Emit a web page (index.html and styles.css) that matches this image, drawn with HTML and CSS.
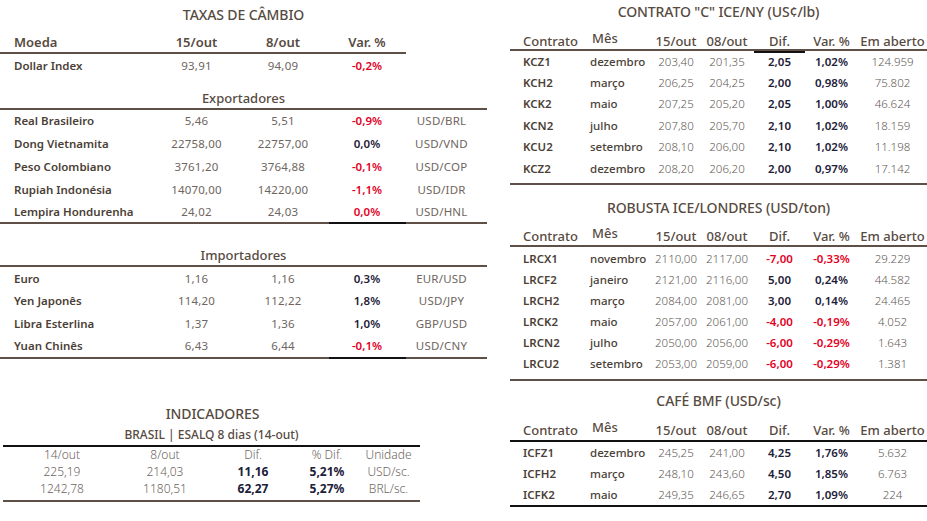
FILE: index.html
```html
<!DOCTYPE html>
<html lang="pt-BR">
<head>
<meta charset="utf-8">
<title>Mercado de Café</title>
<link rel="stylesheet" href="styles.css">
</head>
<body>
<div class="page">
  <section class="left">
    <div class="fx">
      <h2 class="title">TAXAS DE CÂMBIO</h2>
      <div class="fx-head">
        <span class="c-name">Moeda</span><span>15/out</span><span>8/out</span><span>Var. %</span>
      </div>
      <div class="fx-row first">
        <span class="c-name">Dollar Index</span><span class="num">93,91</span><span class="num">94,09</span><span class="var neg">-0,2%</span><span></span>
      </div>
      <h3 class="group">Exportadores</h3>
      <div class="fx-row"><span class="c-name">Real Brasileiro</span><span class="num">5,46</span><span class="num">5,51</span><span class="var neg">-0,9%</span><span class="code">USD/BRL</span></div>
      <div class="fx-row"><span class="c-name">Dong Vietnamita</span><span class="num">22758,00</span><span class="num">22757,00</span><span class="var pos">0,0%</span><span class="code">USD/VND</span></div>
      <div class="fx-row"><span class="c-name">Peso Colombiano</span><span class="num">3761,20</span><span class="num">3764,88</span><span class="var neg">-0,1%</span><span class="code">USD/COP</span></div>
      <div class="fx-row"><span class="c-name">Rupiah Indonésia</span><span class="num">14070,00</span><span class="num">14220,00</span><span class="var neg">-1,1%</span><span class="code">USD/IDR</span></div>
      <div class="fx-row"><span class="c-name">Lempira Hondurenha</span><span class="num">24,02</span><span class="num">24,03</span><span class="var neg">0,0%</span><span class="code">USD/HNL</span></div>
      <div class="rule fx-rule"><i></i><i class="dark"></i><i></i></div>
      <h3 class="group imp">Importadores</h3>
      <div class="fx-row imp-row"><span class="c-name">Euro</span><span class="num">1,16</span><span class="num">1,16</span><span class="var pos">0,3%</span><span class="code">EUR/USD</span></div>
      <div class="fx-row imp-row"><span class="c-name">Yen Japonês</span><span class="num">114,20</span><span class="num">112,22</span><span class="var pos">1,8%</span><span class="code">USD/JPY</span></div>
      <div class="fx-row imp-row"><span class="c-name">Libra Esterlina</span><span class="num">1,37</span><span class="num">1,36</span><span class="var pos">1,0%</span><span class="code">GBP/USD</span></div>
      <div class="fx-row imp-row"><span class="c-name">Yuan Chinês</span><span class="num">6,43</span><span class="num">6,44</span><span class="var neg">-0,1%</span><span class="code">USD/CNY</span></div>
      <div class="rule fx-rule"><i></i><i class="dark"></i><i></i></div>
    </div>

    <div class="ind">
      <h2 class="title ind-title">INDICADORES</h2>
      <h3 class="ind-sub">BRASIL | ESALQ 8 dias (14-out)</h3>
      <div class="ind-row ind-head"><span>14/out</span><span>8/out</span><span>Dif.</span><span>% Dif.</span><span>Unidade</span></div>
      <div class="ind-row"><span>225,19</span><span>214,03</span><span class="b">11,16</span><span class="b">5,21%</span><span>USD/sc.</span></div>
      <div class="ind-row last"><span>1242,78</span><span>1180,51</span><span class="b">62,27</span><span class="b">5,27%</span><span>BRL/sc.</span></div>
    </div>
  </section>

  <section class="right">
    <div class="mkt kc">
      <h2 class="title">CONTRATO "C" ICE/NY (US¢/lb)</h2>
      <div class="m-head"><span class="c1">Contrato</span><span class="c2">Mês</span><span>15/out</span><span>08/out</span><span class="dk">Dif.</span><span>Var. %</span><span>Em aberto</span></div>
      <div class="m-body">
        <div class="m-row"><span class="c1">KCZ1</span><span class="c2">dezembro</span><span class="num">203,40</span><span class="num">201,35</span><span class="var pos">2,05</span><span class="var pos">1,02%</span><span class="num">124.959</span></div>
        <div class="m-row"><span class="c1">KCH2</span><span class="c2">março</span><span class="num">206,25</span><span class="num">204,25</span><span class="var pos">2,00</span><span class="var pos">0,98%</span><span class="num">75.802</span></div>
        <div class="m-row"><span class="c1">KCK2</span><span class="c2">maio</span><span class="num">207,25</span><span class="num">205,20</span><span class="var pos">2,05</span><span class="var pos">1,00%</span><span class="num">46.624</span></div>
        <div class="m-row"><span class="c1">KCN2</span><span class="c2">julho</span><span class="num">207,80</span><span class="num">205,70</span><span class="var pos">2,10</span><span class="var pos">1,02%</span><span class="num">18.159</span></div>
        <div class="m-row"><span class="c1">KCU2</span><span class="c2">setembro</span><span class="num">208,10</span><span class="num">206,00</span><span class="var pos">2,10</span><span class="var pos">1,02%</span><span class="num">11.198</span></div>
        <div class="m-row"><span class="c1">KCZ2</span><span class="c2">dezembro</span><span class="num">208,20</span><span class="num">206,20</span><span class="var pos">2,00</span><span class="var pos">0,97%</span><span class="num">17.142</span></div>
      </div>
    </div>

    <div class="mkt lr">
      <h2 class="title">ROBUSTA ICE/LONDRES (USD/ton)</h2>
      <div class="m-head"><span class="c1">Contrato</span><span class="c2">Mês</span><span>15/out</span><span>08/out</span><span>Dif.</span><span>Var. %</span><span>Em aberto</span></div>
      <div class="m-body">
        <div class="m-row"><span class="c1">LRCX1</span><span class="c2">novembro</span><span class="num">2110,00</span><span class="num">2117,00</span><span class="var neg">-7,00</span><span class="var neg">-0,33%</span><span class="num">29.229</span></div>
        <div class="m-row"><span class="c1">LRCF2</span><span class="c2">janeiro</span><span class="num">2121,00</span><span class="num">2116,00</span><span class="var pos">5,00</span><span class="var pos">0,24%</span><span class="num">44.582</span></div>
        <div class="m-row"><span class="c1">LRCH2</span><span class="c2">março</span><span class="num">2084,00</span><span class="num">2081,00</span><span class="var pos">3,00</span><span class="var pos">0,14%</span><span class="num">24.465</span></div>
        <div class="m-row"><span class="c1">LRCK2</span><span class="c2">maio</span><span class="num">2057,00</span><span class="num">2061,00</span><span class="var neg">-4,00</span><span class="var neg">-0,19%</span><span class="num">4.052</span></div>
        <div class="m-row"><span class="c1">LRCN2</span><span class="c2">julho</span><span class="num">2050,00</span><span class="num">2056,00</span><span class="var neg">-6,00</span><span class="var neg">-0,29%</span><span class="num">1.643</span></div>
        <div class="m-row"><span class="c1">LRCU2</span><span class="c2">setembro</span><span class="num">2053,00</span><span class="num">2059,00</span><span class="var neg">-6,00</span><span class="var neg">-0,29%</span><span class="num">1.381</span></div>
      </div>
    </div>

    <div class="mkt bmf">
      <h2 class="title">CAFÉ BMF (USD/sc)</h2>
      <div class="m-head"><span class="c1">Contrato</span><span class="c2">Mês</span><span>15/out</span><span>08/out</span><span>Dif.</span><span>Var. %</span><span>Em aberto</span></div>
      <div class="m-body">
        <div class="m-row"><span class="c1">ICFZ1</span><span class="c2">dezembro</span><span class="num">245,25</span><span class="num">241,00</span><span class="var pos">4,25</span><span class="var pos">1,76%</span><span class="num">5.632</span></div>
        <div class="m-row"><span class="c1">ICFH2</span><span class="c2">março</span><span class="num">248,10</span><span class="num">243,60</span><span class="var pos">4,50</span><span class="var pos">1,85%</span><span class="num">6.763</span></div>
        <div class="m-row"><span class="c1">ICFK2</span><span class="c2">maio</span><span class="num">249,35</span><span class="num">246,65</span><span class="var pos">2,70</span><span class="var pos">1,09%</span><span class="num">224</span></div>
      </div>
    </div>
  </section>
</div>
</body>
</html>
```

FILE: styles.css
```css
* { box-sizing: border-box; margin: 0; padding: 0; }

html, body { background: #ffffff; }

body {
  margin: 0;
  width: 927px;
  height: 521px;
  overflow: hidden;
  font-family: "Noto Sans", "Open Sans", "DejaVu Sans", sans-serif;
  color: #4b3f37;
  font-size: 12px;
}

.page {
  display: flex;
  align-items: flex-start;
  gap: 23px;
}

.title {
  font-size: 14px;
  font-weight: 500;
  color: #574a3f;
  text-align: center;
  line-height: 30px;
  letter-spacing: -0.1px;
}

/* ---------- left column ---------- */
.left {
  width: 487px;
  display: flex;
  flex-direction: column;
}

.fx-head,
.fx-row {
  display: grid;
  grid-template-columns: 155px 83px 90px 78px 81px;
  align-items: center;
}

.fx-head {
  grid-template-columns: 155px 83px 90px 78px;
  width: 406px;
  height: 24px;
  padding-top: 2px;
  font-size: 13px;
  font-weight: 600;
  color: #574a3f;
  line-height: 20px;
  border-bottom: 2px solid #5e5047;
  text-align: center;
}
.fx-head .c-name { text-align: left; }

.c-name {
  padding-left: 14px;
  text-align: left;
  white-space: nowrap;
}

.fx-row {
  height: 22.6px;
  line-height: 18px;
  padding-top: 2px;
  text-align: center;
}
.fx-row .c-name {
  font-weight: 600;
  color: #4b3f37;
  font-size: 11.5px;
}
.fx-row.first { height: 21.5px; padding-top: 2px; }
.fx-row.imp-row { height: 22.3px; padding-top: 1px; }
.group + .fx-row { padding-top: 1px; }

.num {
  color: #6e6560;
  font-weight: 400;
  font-size: 11.5px;
  letter-spacing: 0.2px;
}

.var {
  font-weight: 600;
  font-size: 11.5px;
}
.neg { color: #e3001f; }
.pos { color: #1c2038; }

.code {
  color: #6e6560;
  font-size: 11.5px;
  padding-right: 10px;
  letter-spacing: 0.2px;
}

.group {
  font-size: 13px;
  font-weight: 500;
  color: #574a3f;
  text-align: center;
  line-height: 20px;
  padding-top: 12px;
  border-bottom: 2px solid #5e5047;
  width: 487px;
}
.group.imp { padding-top: 21px; }

.rule {
  display: grid;
  height: 2px;
}
.rule i { background: #5e5047; display: block; }
.rule i.dark { background: #111111; }
.fx-rule { grid-template-columns: 329px 77px 81px; }

/* indicadores */
.ind {
  width: 425px;
  margin-top: 44px;
  display: flex;
  flex-direction: column;
}
.ind-title { line-height: 22px; }
.ind-sub {
  font-size: 12px;
  font-weight: 500;
  color: #574a3f;
  text-align: center;
  line-height: 20px;
  margin-left: 3px;
  width: 417px;
  border-bottom: 2px solid #111111;
}
.ind-row {
  display: grid;
  grid-template-columns: 118px 88px 88px 60px 63px;
  margin-left: 3px;
  width: 417px;
  height: 17.5px;
  line-height: 15px;
  text-align: center;
  color: #6e6560;
  font-size: 12px;
  font-weight: 300;
}
.ind-head { height: 17px; line-height: 16px; }
.ind-row .b { color: #1c2038; font-weight: 700; }
.ind-row.last { border-bottom: 2px solid #5e5047; height: 20.5px; }

/* ---------- right column ---------- */
.right {
  width: 417px;
  display: flex;
  flex-direction: column;
}

.right .title { line-height: 24px; }

.m-head,
.m-row {
  display: grid;
  grid-template-columns: 78px 64px 48px 54px 51px 53px 69px;
  text-align: center;
  align-items: center;
}

.m-head {
  height: 27px;
  padding-top: 7px;
  line-height: 20px;
  font-size: 13px;
  font-weight: 500;
  color: #574a3f;
  border-bottom: 2px solid #5e5047;
  align-items: end;
}
.m-head span { height: 20px; }
.m-head .c1 { text-align: left; padding-left: 13px; }
.m-head .c2 { text-align: left; padding-left: 4px; position: relative; top: -3px; }
.kc .m-head .dk { box-shadow: 0 2px 0 #111111; }

.m-row {
  line-height: 18px;
  font-size: 11.5px;
}
.m-row .c1 {
  text-align: left;
  padding-left: 13px;
  font-weight: 600;
  color: #4b3f37;
}
.m-row .c2 {
  text-align: left;
  padding-left: 2px;
  font-weight: 500;
  color: #4b3f37;
}
.m-row .num { letter-spacing: 0; font-weight: 300; color: #625955; }

.m-body { border-bottom: 2px solid #5e5047; }

.kc .m-row { height: 21.4px; }
.kc .m-body { padding-bottom: 3.6px; }

.lr { margin-top: 11px; }
.lr .m-head { height: 27px; padding-top: 6px; }
.lr .m-row { height: 21px; padding-top: 3px; }
.lr .m-body { padding-bottom: 6px; }

.bmf { margin-top: 8px; }
.bmf .m-head { height: 29px; padding-top: 7px; border-bottom-color: #111111; }
.bmf .m-row { height: 21px; padding-top: 2px; }
.bmf .m-body { border-bottom-color: #111111; }
```
